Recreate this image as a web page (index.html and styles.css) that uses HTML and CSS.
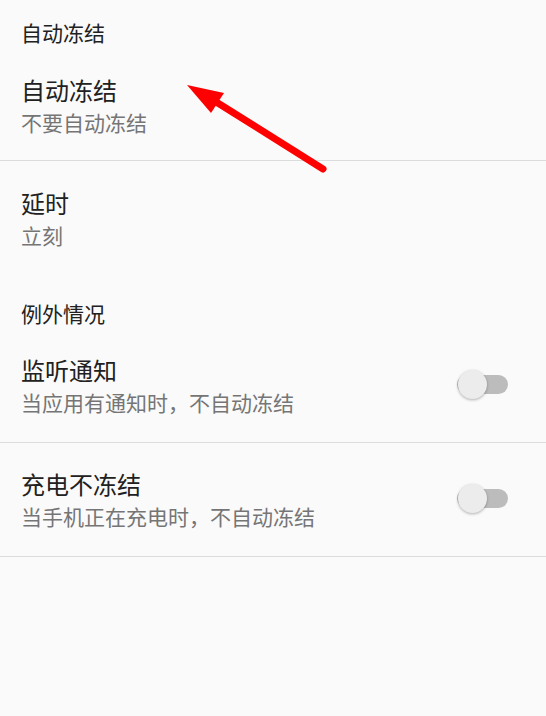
FILE: index.html
```html
<!DOCTYPE html>
<html lang="zh-CN">
<head>
    <meta charset="UTF-8">
    <meta name="viewport" content="width=device-width, initial-scale=1.0">
    <title>自动冻结</title>
    <link rel="stylesheet" href="styles.css">
</head>
<body>
    <div class="prefs">
        <div class="category first">自动冻结</div>
        <div class="pref divided">
            <div class="pref-text">
                <div class="pref-title">自动冻结</div>
                <div class="pref-summary">不要自动冻结</div>
            </div>
        </div>
        <div class="pref">
            <div class="pref-text">
                <div class="pref-title">延时</div>
                <div class="pref-summary">立刻</div>
            </div>
        </div>

        <div class="category">例外情况</div>
        <div class="pref divided with-switch">
            <div class="pref-text">
                <div class="pref-title">监听通知</div>
                <div class="pref-summary">当应用有通知时，不自动冻结</div>
            </div>
            <div class="switch"><span class="thumb"></span></div>
        </div>
        <div class="pref divided with-switch">
            <div class="pref-text">
                <div class="pref-title">充电不冻结</div>
                <div class="pref-summary">当手机正在充电时，不自动冻结</div>
            </div>
            <div class="switch"><span class="thumb"></span></div>
        </div>

        <!-- annotation arrow drawn over the list -->
        <svg class="arrow" width="546" height="716" viewBox="0 0 546 716">
            <line x1="213" y1="100" x2="323" y2="169" stroke="#ff0000" stroke-width="7" stroke-linecap="round"/>
            <polygon points="187,85 224,93 211,113" fill="#ff0000"/>
        </svg>
    </div>
</body>
</html>
```

FILE: styles.css
```css
html, body {
    margin: 0;
    padding: 0;
}
body {
    background: #fafafa;
    font-family: "Noto Sans CJK SC", "Noto Sans", sans-serif;
    color: #212121;
}
.prefs {
    position: relative;
    width: 546px;
    height: 716px;
}
.category {
    padding: 26px 21px 1px;
    font-size: 21px;
    line-height: 28px;
    color: #212121;
}
.category.first {
    padding-top: 18px;
    padding-bottom: 2px;
}
.pref {
    display: flex;
    align-items: center;
    padding: 26px 38px 24px 21px;
}
.pref.divided {
    border-bottom: 1px solid #dcdcdc;
}
.pref.with-switch {
    padding-bottom: 26px;
}
.pref.with-switch + .pref {
    padding-top: 25px;
}
.pref-text {
    flex: 1;
}
.pref-title {
    font-size: 24px;
    line-height: 32px;
    color: #212121;
}
.pref-summary {
    margin-top: 2px;
    font-size: 21px;
    line-height: 28px;
    color: #757575;
}
.switch {
    position: relative;
    width: 51px;
    height: 19px;
    border-radius: 10px;
    background: #bcbcbc;
    margin-bottom: 2px;
}
.thumb {
    position: absolute;
    left: 1px;
    top: -5px;
    width: 29px;
    height: 29px;
    border-radius: 50%;
    background: #ececec;
    box-shadow: 0 1px 3px rgba(0, 0, 0, 0.3);
}
.arrow {
    position: absolute;
    left: 0;
    top: 0;
    pointer-events: none;
}
```
